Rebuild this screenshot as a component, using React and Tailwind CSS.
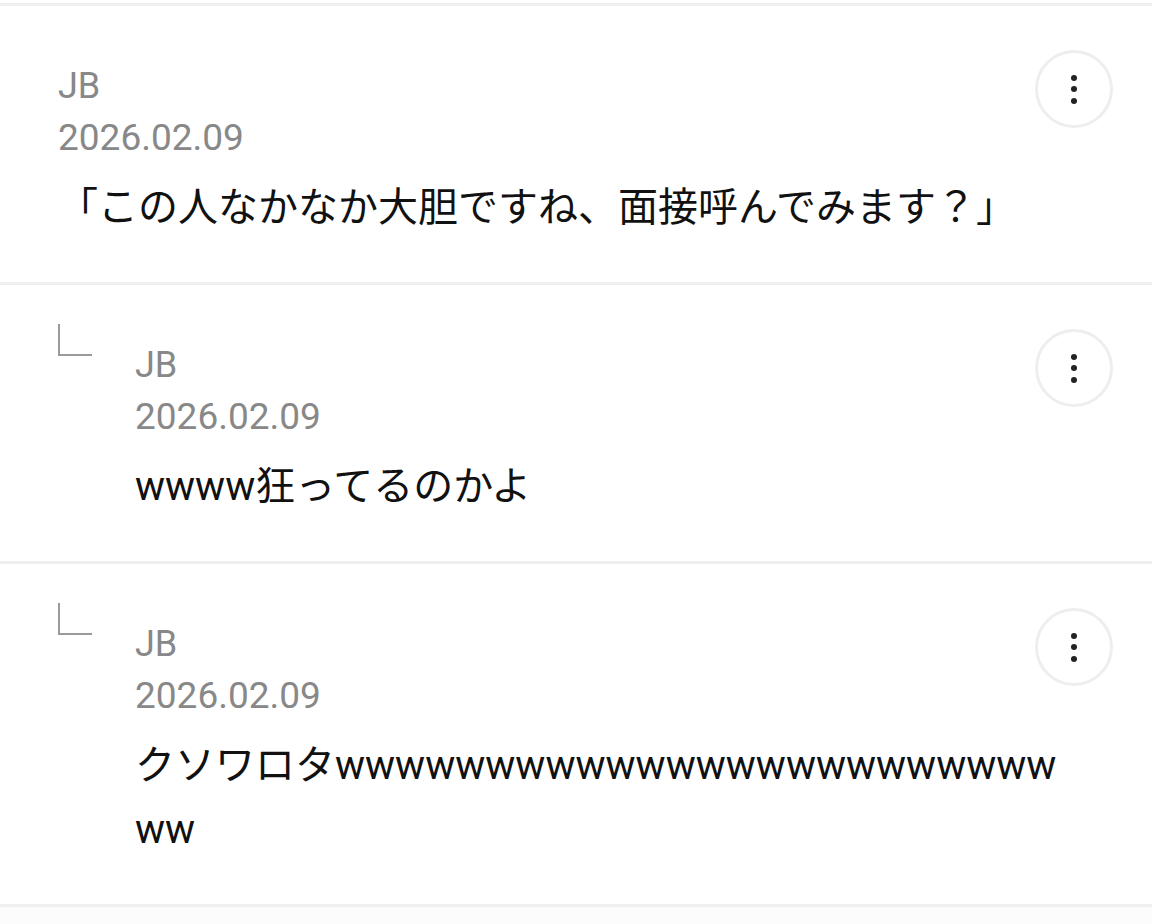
import React from "react";

const comments = [
  { reply: false, name: "JB", date: "2026.02.09", body: "「この人なかなか大胆ですね、面接呼んでみます？」" },
  { reply: true, name: "JB", date: "2026.02.09", body: "wwww狂ってるのかよ" },
  { reply: true, name: "JB", date: "2026.02.09", body: "クソワロタwwwwwwwwwwwwwwwwwwwwwwwwww" },
];

function MoreButton() {
  return (
    <button className="absolute right-[39px] top-[44px] w-[78px] h-[78px] rounded-full border-[3px] border-[#eeeeee] bg-white flex flex-col items-center justify-center gap-[5.5px]">
      <span className="block w-[6px] h-[6px] rounded-full bg-[#222]" />
      <span className="block w-[6px] h-[6px] rounded-full bg-[#222]" />
      <span className="block w-[6px] h-[6px] rounded-full bg-[#222]" />
    </button>
  );
}

function Comment({ c }) {
  return (
    <div className={`relative bg-white border-b-[3px] border-[#efefef] pl-[58px] pr-[92px] pb-[42px] ${c.reply ? "pt-[39px] flex" : "pt-[55px]"}`}>
      {c.reply && (
        <div className="w-[77px] shrink-0">
          <div className="w-[34px] h-[32px] border-l-2 border-b-2 border-[#9a9a9a]" />
        </div>
      )}
      <div className={`min-w-0 flex-1 ${c.reply ? "pt-[16px]" : ""}`}>
        <div className="text-[36px] leading-[51px] text-[#888888]">{c.name}</div>
        <div className="text-[37px] leading-[51px] text-[#888888]">{c.date}</div>
        <div className="mt-[13px] text-[40px] leading-[64px] text-[#111111] break-all">{c.body}</div>
      </div>
      <MoreButton />
    </div>
  );
}

export default function App() {
  return (
    <div
      className="w-[1152px] h-[924px] overflow-hidden bg-[#fcfcfc]"
      style={{ fontFamily: 'Roboto, "Noto Sans CJK JP", sans-serif' }}
    >
      <div className="h-[3px] bg-white" />
      <div className="border-t-[3px] border-[#efefef]">
        {comments.map((c, i) => (
          <Comment key={i} c={c} />
        ))}
      </div>
    </div>
  );
}
